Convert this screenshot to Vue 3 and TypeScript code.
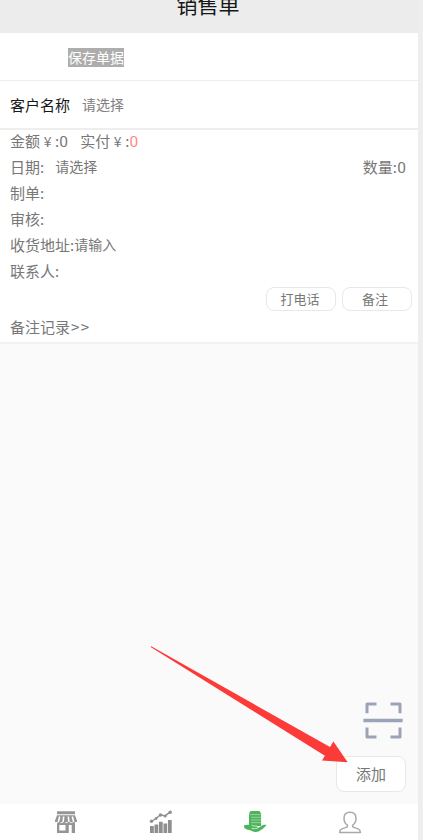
<script setup lang="ts">
import { ref } from 'vue'

const title = '销售单'
const amount = ref<number>(0)
const paid = ref<number>(0)
const quantity = ref<number>(0)
</script>

<template>
  <div class="page">
    <header class="header"><h1>{{ title }}</h1></header>

    <div class="toolbar"><span class="save">保存单据</span></div>

    <div class="customer">
      <span class="label">客户名称</span>
      <span class="pick">请选择</span>
    </div>

    <section class="info">
      <div class="row">
        <span>金额<span class="yen">¥</span>:<span class="num">{{ amount }}</span></span>
        <span class="paid">实付<span class="yen">¥</span>:<em class="num">{{ paid }}</em></span>
      </div>
      <div class="row">
        <span>日期:</span>
        <span class="small date">请选择</span>
        <span class="qty">数量:<span class="num">{{ quantity }}</span></span>
      </div>
      <div class="row">制单:</div>
      <div class="row">审核:</div>
      <div class="row">收货地址:<span class="small">请输入</span></div>
      <div class="row">联系人:</div>
      <div class="actions">
        <button type="button">打电话</button>
        <button type="button" class="note">备注</button>
      </div>
      <div class="row log">备注记录<span class="more">&gt;&gt;</span></div>
    </section>

    <main class="body">
      <svg class="scan" viewBox="0 0 40 38" fill="none" stroke="#9ca3b8">
        <path stroke-width="3" stroke-linejoin="round" d="M4 12.300V3h9.500M27.500 3H37v9.300M4 26.500V36h9.500M27.500 36H37v-9.500" />
        <path stroke-width="3.400" d="M.4 19.500h39.300" />
      </svg>
      <button type="button" class="add">添加</button>
    </main>

    <nav class="tabs">
      <div class="tab">
        <svg viewBox="0 0 24 24">
          <g fill="#959595">
            <path d="M3 1.300h18v3H3zM3 5.300h18l2 5.500v1.200H1v-1.200z" />
            <path fill-rule="evenodd" d="M3 12h18v11h-3.300v-8h-2.900v8H3zM5.300 15v5.500h6.200V15z" />
          </g>
          <path d="M5.700 6.500l-1.400 5.500M9.700 6.500l-.6 5.500M14.300 6.500l.6 5.500M18.300 6.500l1.400 5.500" stroke="#fff" stroke-width="1.600" />
          <path d="M1.500 12.600h21" stroke="#fff" stroke-width=".8" stroke-dasharray="2.800 2" />
        </svg>
      </div>
      <div class="tab">
        <svg viewBox="0 0 24 24" fill="#8f8f8f">
          <path d="M1 16h3.800v7H1zM5.500 14.500h3.800V23H5.500zM10 11.800h3.700V23H10zM14.500 13.500h3.700V23h-3.700zM19 10h3.700v13H19z" />
          <path d="M2.300 11.500l4.800-3 4.300-3.800 4.700 1.200 5.200-4" fill="none" stroke="#8f8f8f" stroke-width="1.400" />
          <circle cx="2.500" cy="11.300" r="1.700" /><circle cx="7.100" cy="8.500" r="1.400" />
          <circle cx="11.500" cy="5" r="1.700" /><circle cx="16.200" cy="6" r="1.500" /><circle cx="21.200" cy="2.200" r="1.700" />
        </svg>
      </div>
      <div class="tab">
        <svg viewBox="0 0 24 24">
          <path fill="#4db45c" d="M7.500.9h9l1.600 2.500V16H6V3.400z" />
          <path stroke="#b5dfbb" stroke-width=".7" d="M6.500 4.600H18M8 7.300h10M8 10h10M8 12.600h10" />
          <path fill="#4db45c" d="M1 15.200c3-.8 6-.8 8.500.6l4.500.3c1.100.2 1.100 1.400.2 1.700 1.800 0 2.800-.6 4.100-1.700 1.600-1.300 3.600-1.700 5.200-1-2.200 2.700-5 5.000-7.500 6.200-2.600 1-4.900.7-7.700-.6-1.700-.8-2.600-1-3.800-1L1.300 18z" />
          <path d="M8.500 15c1.500 1.300 3.500 1 5.700 1.200 1.300.6 1 1.800 0 2-2 .6-4 .7-5.700.1" fill="none" stroke="#fff" stroke-width=".7" />
        </svg>
      </div>
      <div class="tab">
        <svg viewBox="0 0 24 24" fill="none" stroke="#a9a9a9" stroke-width="1.500" stroke-linejoin="round">
          <path d="M12 2.300c-3.800 0-6 2.500-6 5.900 0 2.900 1.300 5.500 3.300 7 .5 1-.1 1.800-1.200 2.200l-4.200 1.500c-1.700.7-2.200 1.800-2.300 3.700h20.800c-.1-1.900-.6-3-2.300-3.700l-4.200-1.500c-1.100-.4-1.700-1.200-1.200-2.200 2-1.500 3.300-4.100 3.300-7 0-3.400-2.200-5.900-6-5.900z" />
        </svg>
      </div>
    </nav>

    <svg class="pointer" viewBox="0 0 198 122">
      <path fill="#fc3b39" d="M.8 1 180 102l3.400-5.500 14.300 20.700-25.700-1.600 2.900-4.900L1 2.300z" />
    </svg>
  </div>
</template>

<style>
body { background: #eeeeee; }
</style>

<style scoped>
.page {
  position: relative;
  box-sizing: border-box;
  width: 418px;
  height: 840px;
  display: flex;
  flex-direction: column;
  overflow: hidden;
  background: #fafafa;
  color: #777;
  font: 15px/26px "Noto Sans CJK SC", sans-serif;
}
.header {
  height: 33px;
  flex: none;
  display: flex;
  justify-content: center;
  background: #ececec;
}
h1 {
  margin: -11px 2px 0 0;
  height: 30px;
  font-size: 21px;
  line-height: 30px;
  font-weight: 400;
  color: #171717;
}
.toolbar {
  box-sizing: border-box;
  height: 48px;
  flex: none;
  padding: 15px 0 0 68px;
  background: #fff;
  border-bottom: 1px solid #eeeeee;
}
.save {
  display: block;
  width: 56px;
  height: 19px;
  background: #adadad;
  color: #fff;
  font-size: 14px;
  line-height: 19px;
  white-space: nowrap;
}
.customer {
  box-sizing: border-box;
  height: 49px;
  flex: none;
  display: flex;
  align-items: center;
  gap: 12px;
  padding: 0 0 0 10px;
  background: #fff;
  border-bottom: 2px solid #eeeeee;
}
.label { color: #171717; }
.pick { margin-top: -1px; font-size: 14px; color: #808080; }
.info {
  box-sizing: border-box;
  height: 214px;
  flex: none;
  padding: 0 12px 0 10px;
  border-bottom: 2px solid #f2f2f2;
  background: #fff;
}
.row { display: flex; height: 26px; white-space: nowrap; }
.row:first-child { margin-top: -2px; }
.num { display: inline-block; width: 9px; text-align: center; font-family: Roboto, sans-serif; font-size: 15.5px; line-height: 20px; }
.yen { display: inline-block; width: 15px; text-align: center; font-size: 14px; line-height: 20px; }
.paid { margin-left: 12px; }
em { font-style: normal; color: #ff8a84; }
.small { font-size: 14px; line-height: 25px; }
.date { margin-left: 11px; }
.qty { margin-left: auto; }
.more { letter-spacing: 1.500px; margin-left: 1px; }
.actions { display: flex; justify-content: flex-end; gap: 6px; margin-right: -6px; padding-top: 3px; }
button {
  box-sizing: border-box;
  padding: 0;
  border: 1px solid #e8e8e8;
  border-radius: 8px;
  background: #fff;
  color: #777;
  font-family: inherit;
}
.actions button { width: 70px; height: 24px; font-size: 13px; line-height: 22px; padding-right: 2px; }
.actions .note { padding-right: 4px; }
.log { margin-top: 3px; }
.body {
  flex: 1;
  display: flex;
  flex-direction: column;
  align-items: flex-end;
  justify-content: flex-end;
  padding: 0 12px 12px 0;
}
.scan { width: 40px; height: 38px; margin: 0 3px 17px 0; overflow: visible; }
.add { width: 70px; height: 36px; font-size: 15px; line-height: 34px; }
.tabs {
  height: 36px;
  flex: none;
  display: flex;
  padding: 0 21px 0 19px;
  background: #fff;
}
.tab { flex: 1; display: flex; justify-content: center; padding-top: 6px; }
.tab svg { width: 24px; height: 24px; }
.pointer { position: absolute; left: 150px; top: 645px; width: 198px; height: 122px; }
</style>
